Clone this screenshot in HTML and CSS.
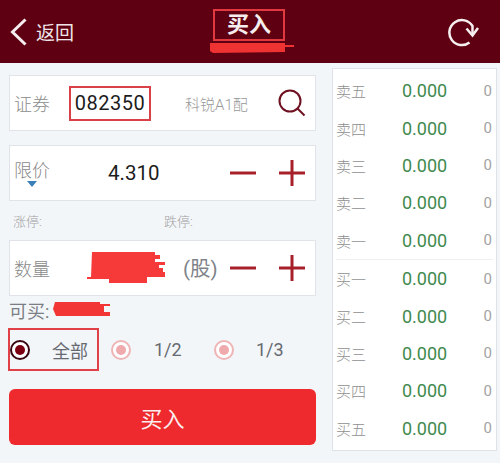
FILE: index.html
```html
<!DOCTYPE html>
<html lang="zh">
<head>
<meta charset="utf-8">
<title>买入</title>
<link rel="stylesheet" href="styles.css">
</head>
<body>
<header class="topbar">
  <div class="back">
    <svg class="back-icon" viewBox="0 0 18 28"><path d="M15.500 1.500 2.500 14l13 12.500"/></svg>
    <span>返回</span>
  </div>
  <div class="title-wrap">
    <div class="title">买入</div>
    <svg class="title-scribble" viewBox="0 0 86 12"><path d="M1 1H76V3H85V5H76V10L4 11 1 9Z"/></svg>
  </div>
  <svg class="refresh" viewBox="0 0 32 30"><path d="M21.500 25.500A12.500 12.500 0 1 1 24.500 9L24.500 18"/><path d="M18.500 11.500 24.500 18.500 30 11"/></svg>
</header>
<main class="content">
  <section class="form">
    <div class="card card-code">
      <span class="label">证券</span>
      <span class="code">082350</span>
      <span class="name">科锐A1配</span>
      <svg class="search" viewBox="0 0 28 28"><circle cx="12" cy="12" r="10.500"/><path d="m19.500 19.500 7 7"/></svg>
    </div>
    <div class="card card-price">
      <div class="label-col"><span class="label">限价</span><i class="caret"></i></div>
      <span class="value">4.310</span>
      <div class="steps">
        <svg class="step" viewBox="0 0 26 26"><path d="M0 13H26"/></svg>
        <svg class="step" viewBox="0 0 26 26"><path d="M0 13H26M13 0V26"/></svg>
      </div>
    </div>
    <div class="limits"><span class="limit">涨停:</span><span class="limit">跌停:</span></div>
    <div class="card card-qty">
      <span class="label">数量</span>
      <svg class="qty-scribble" viewBox="0 0 80 32"><path d="M5 0H68V3H73V7H68V10H78V13H72V16H76V20H78V25H60V31H22V27H0V25H4Z"/></svg>
      <span class="unit">(股)</span>
      <div class="steps">
        <svg class="step" viewBox="0 0 26 26"><path d="M0 13H26"/></svg>
        <svg class="step" viewBox="0 0 26 26"><path d="M0 13H26M13 0V26"/></svg>
      </div>
    </div>
    <div class="avail">
      <span>可买:</span>
      <svg class="avail-scribble" viewBox="0 0 60 16"><path d="M3 1H48V3H58V5H52V11H58V15H4L1 8Z"/></svg>
    </div>
    <div class="ratios">
      <div class="ratio ratio-all"><i class="radio on"></i><span>全部</span></div>
      <div class="ratio ratio-half"><i class="radio"></i><span>1/2</span></div>
      <div class="ratio ratio-third"><i class="radio"></i><span>1/3</span></div>
    </div>
    <button class="buy">买入</button>
  </section>
  <aside class="book">
    <div class="side">
      <div class="row"><span>卖五</span><b>0.000</b><em>0</em></div>
      <div class="row"><span>卖四</span><b>0.000</b><em>0</em></div>
      <div class="row"><span>卖三</span><b>0.000</b><em>0</em></div>
      <div class="row"><span>卖二</span><b>0.000</b><em>0</em></div>
      <div class="row"><span>卖一</span><b>0.000</b><em>0</em></div>
    </div>
    <div class="side side-buy">
      <div class="row"><span>买一</span><b>0.000</b><em>0</em></div>
      <div class="row"><span>买二</span><b>0.000</b><em>0</em></div>
      <div class="row"><span>买三</span><b>0.000</b><em>0</em></div>
      <div class="row"><span>买四</span><b>0.000</b><em>0</em></div>
      <div class="row"><span>买五</span><b>0.000</b><em>0</em></div>
    </div>
  </aside>
</main>
</body>
</html>
```
FILE: styles.css
```css
* { box-sizing: border-box; }
html, body { margin: 0; padding: 0; }
body {
  width: 500px;
  height: 463px;
  overflow: hidden;
  background: #f3f6f9;
  font-family: "Roboto", "Noto Sans CJK SC", sans-serif;
}

.topbar {
  position: relative;
  height: 63px;
  background: #5e0011;
  color: #fff;
  display: flex;
  align-items: center;
  padding: 0 20px 0 10px;
}
.back { display: flex; align-items: center; gap: 8px; font-size: 19px; color: #f0e6e8; }
.back-icon { width: 18px; height: 28px; fill: none; stroke: #f5eef0; stroke-width: 3; }
.title-wrap { position: absolute; left: 213px; top: 9px; width: 72px; }
.title {
  height: 32px;
  border: 2px solid #e0393f;
  text-align: center;
  font-size: 22px;
  font-weight: 700;
  line-height: 27px;
  color: #f6eeee;
}
.title-scribble { position: absolute; left: -4px; top: 33px; width: 86px; height: 12px; fill: #ef3232; }
.refresh { margin-left: auto; width: 32px; height: 30px; fill: none; stroke: #f7f0f1; stroke-width: 2.500; }

.content { display: flex; align-items: flex-start; padding: 5px 3px 0 9px; gap: 16px; }
.form { width: 307px; padding-top: 7px; flex: none; }

.card {
  height: 56px;
  background: #fff;
  border: 1px solid #e0e3e7;
  display: flex;
  align-items: center;
  padding: 0 10px 0 4px;
}
.label { flex: none; white-space: nowrap; font-size: 18px; font-weight: 300; color: #8a8a8a; }
.card-code { margin-bottom: 14px; padding-right: 0; }
.code {
  flex: none;
  margin-left: 19px;
  width: 82px;
  height: 35px;
  border: 2px solid #d94048;
  font-size: 20px;
  line-height: 31px;
  text-align: center;
  color: #1c1c1c;
  letter-spacing: 0.500px;
}
.name { flex: none; margin-left: 34px; font-size: 15px; font-weight: 300; color: #999; width: 66px; white-space: nowrap; }
.search { flex: none; margin-left: 27px; width: 28px; height: 28px; fill: none; stroke: #6e1020; stroke-width: 2; }

.label-col { display: flex; flex-direction: column; align-items: center; width: 36px; height: 34px; margin-top: 0; }
.caret { width: 0; height: 0; margin-top: -1px; border: 5px solid transparent; border-top: 6px solid #3a7fb5; border-bottom: 0; }
.value { margin-left: 58px; font-size: 20.500px; color: #1c1c1c; }
.steps { margin-left: auto; display: flex; gap: 23px; }
.step { display: block; width: 26px; height: 26px; fill: none; stroke: #a6202a; stroke-width: 3; }

.limits { display: flex; height: 39px; align-items: center; padding: 0 0 0 4px; font-size: 13px; font-weight: 300; color: #a0a0a0; }
.limit { width: 151px; }
.card-qty .qty-scribble { margin-left: 37px; width: 80px; height: 32px; fill: #f63a3a; }
.unit { margin-left: 16px; font-size: 20.500px; color: #80838a; margin-top: -2px; }
.avail { position: relative; height: 32px; padding-bottom: 4px; display: flex; align-items: center; font-size: 18px; color: #7b7e84; }
.avail-scribble { position: absolute; left: 43px; top: 5px; width: 60px; height: 16px; fill: #f23636; }

.ratios { display: flex; height: 43px; margin-left: -1px; }
.ratio { display: flex; align-items: center; font-size: 18px; color: #666a70; }
.ratio-all { width: 91px; border: 2px solid #e04048; gap: 22px; }
.ratio-half { margin-left: 12px; width: 103px; gap: 23px; }
.ratio-third { gap: 22px; }
.radio { width: 20px; height: 20px; flex: none; border-radius: 50%; border: 2px solid #efb4b6; background: #fff; position: relative; }
.radio::after { content: ""; position: absolute; inset: 3px; border-radius: 50%; background: #eeaaac; }
.radio.on { border-color: #3a0510; }
.radio.on::after { background: #7d0012; }

.buy {
  display: block;
  width: 307px;
  height: 56px;
  margin-top: 18px;
  border: 0;
  border-radius: 6px;
  background: #ee2a2e;
  color: #fbeeee;
  font: 400 22px "Roboto", "Noto Sans CJK SC", sans-serif;
}

.book { width: 165px; height: 383px; background: #fff; border: 1px solid #dfe2e6; padding: 3px 3px 0; }
.side-buy { border-top: 1px solid #eeeeee; }
.row { height: 37.400px; display: flex; align-items: center; }
.row span { width: 66px; font-size: 15px; font-weight: 300; color: #8f8f8f; }
.row b { width: 70px; font-size: 18px; font-weight: 400; color: #3f8a4e; }
.row em { margin-left: auto; font-size: 15px; font-style: normal; color: #a3a3a3; padding-right: 1px; }
```
